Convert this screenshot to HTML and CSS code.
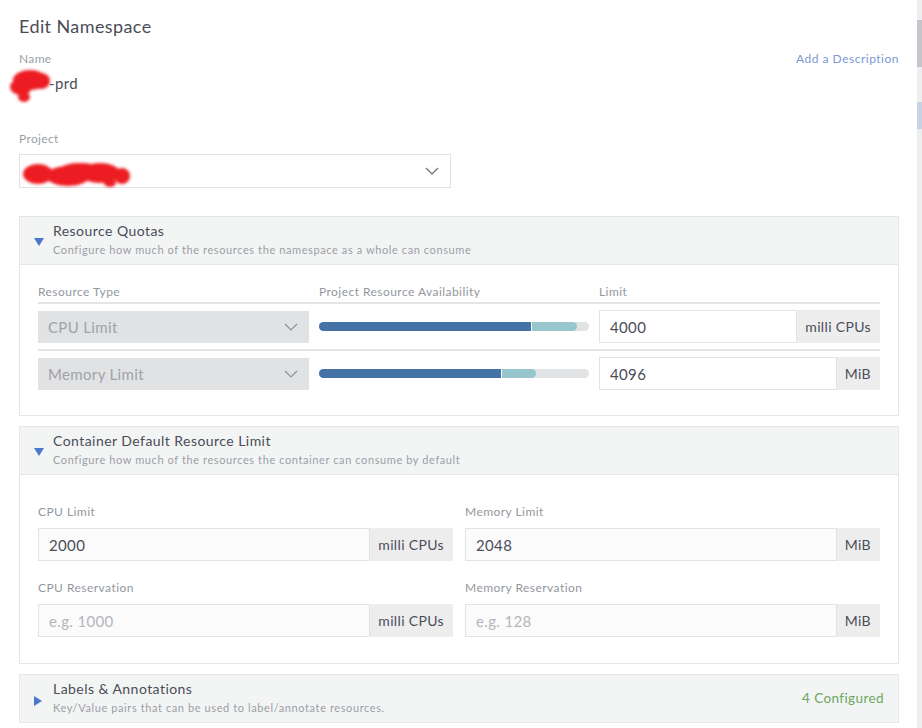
FILE: index.html
```html
<!DOCTYPE html>
<html>
<head>
<meta charset="utf-8">
<link rel="stylesheet" href="styles.css">
</head>
<body>
<div class="page">
  <h1 class="title">Edit Namespace</h1>

  <div class="name-head">
    <span class="lbl">Name</span>
    <span class="add-desc">Add a Description</span>
  </div>
  <div class="name-val">
    <svg class="redact-name" width="46" height="38" viewBox="0 0 46 38">
      <defs><filter id="b1"><feGaussianBlur stdDeviation="1.6"/></filter></defs>
      <g fill="#ec1c24" filter="url(#b1)">
        <ellipse cx="23" cy="13" rx="17" ry="10"/>
        <ellipse cx="14" cy="20" rx="11" ry="8"/>
        <ellipse cx="34" cy="14" rx="9" ry="8"/>
        <ellipse cx="17" cy="30" rx="6" ry="5"/>
      </g>
    </svg><span class="val">-prd</span>
  </div>

  <div class="lbl proj-lbl">Project</div>
  <div class="project-select">
    <svg class="redact-proj" width="114" height="36" viewBox="0 0 114 36">
      <defs><filter id="b2"><feGaussianBlur stdDeviation="1.6"/></filter></defs>
      <g fill="#ec1c24" filter="url(#b2)">
        <ellipse cx="18" cy="19" rx="15" ry="10"/>
        <ellipse cx="48" cy="21" rx="22" ry="10"/>
        <ellipse cx="80" cy="18" rx="20" ry="10"/>
        <ellipse cx="102" cy="21" rx="8" ry="8"/>
        <ellipse cx="60" cy="13" rx="18" ry="5"/>
        <ellipse cx="90" cy="28" rx="6" ry="4"/>
      </g>
    </svg>
    <svg class="chev" width="14" height="8" viewBox="0 0 14 8"><path d="M1 1 L7 7 L13 1" fill="none" stroke="#6b6f76" stroke-width="1.2"/></svg>
  </div>

  <section class="card quotas">
    <header class="card-head">
      <span class="tri-down"></span>
      <div class="head-text">
        <div class="head-title">Resource Quotas</div>
        <div class="head-sub">Configure how much of the resources the namespace as a whole can consume</div>
      </div>
    </header>
    <div class="card-body qbody">
      <div class="qgrid qhead">
        <div>Resource Type</div>
        <div>Project Resource Availability</div>
        <div>Limit</div>
      </div>
      <div class="qgrid qrow first">
        <div class="gsel"><span>CPU Limit</span>
          <svg width="14" height="8" viewBox="0 0 14 8"><path d="M1 1 L7 7 L13 1" fill="none" stroke="#8e9197" stroke-width="1.2"/></svg>
        </div>
        <div class="bar">
          <span class="used" style="width:79%"></span><span class="cur" style="width:16.6%"></span>
        </div>
        <div class="igroup"><span class="inp">4000</span><span class="addon">milli CPUs</span></div>
      </div>
      <div class="qgrid qrow second">
        <div class="gsel"><span>Memory Limit</span>
          <svg width="14" height="8" viewBox="0 0 14 8"><path d="M1 1 L7 7 L13 1" fill="none" stroke="#8e9197" stroke-width="1.2"/></svg>
        </div>
        <div class="bar">
          <span class="used" style="width:67.6%"></span><span class="cur" style="width:12.6%"></span>
        </div>
        <div class="igroup"><span class="inp">4096</span><span class="addon">MiB</span></div>
      </div>
    </div>
  </section>

  <section class="card container">
    <header class="card-head">
      <span class="tri-down"></span>
      <div class="head-text">
        <div class="head-title">Container Default Resource Limit</div>
        <div class="head-sub">Configure how much of the resources the container can consume by default</div>
      </div>
    </header>
    <div class="card-body cbody">
      <div class="field">
        <div class="flbl">CPU Limit</div>
        <div class="igroup tall"><span class="inp soft">2000</span><span class="addon">milli CPUs</span></div>
      </div>
      <div class="field">
        <div class="flbl">Memory Limit</div>
        <div class="igroup tall"><span class="inp soft">2048</span><span class="addon">MiB</span></div>
      </div>
      <div class="field">
        <div class="flbl">CPU Reservation</div>
        <div class="igroup tall"><span class="inp soft ph">e.g. 1000</span><span class="addon">milli CPUs</span></div>
      </div>
      <div class="field">
        <div class="flbl">Memory Reservation</div>
        <div class="igroup tall"><span class="inp soft ph">e.g. 128</span><span class="addon">MiB</span></div>
      </div>
    </div>
  </section>

  <section class="card labels">
    <header class="card-head last">
      <span class="tri-right"></span>
      <div class="head-text">
        <div class="head-title">Labels &amp; Annotations</div>
        <div class="head-sub">Key/Value pairs that can be used to label/annotate resources.</div>
      </div>
      <span class="configured">4 Configured</span>
    </header>
  </section>
</div>
<div class="side">
  <div class="s-gap1"></div>
  <div class="s-thumb"></div>
  <div class="s-gap2"></div>
  <div class="s-blue"></div>
</div>
</body>
</html>
```

FILE: styles.css
```css
* { box-sizing: border-box; }
html, body { margin: 0; padding: 0; background: #fff; }
body {
  display: flex;
  width: 922px;
  height: 728px;
  overflow: hidden;
  font-family: Lato, "Open Sans", sans-serif;
  color: #3c3f49;
  letter-spacing: 0.35px;
}
.page {
  width: 917px;
  padding: 14px 18px 0 19px;
}
.side {
  width: 5px;
  background: #eceef0;
  display: flex;
  flex-direction: column;
}
.s-gap1 { height: 20px; }
.s-thumb { height: 47px; background: #c4c6c9; }
.s-gap2 { height: 35px; }
.s-blue { height: 27px; background: #c8d2e2; }

.title {
  margin: 0;
  font-size: 18px;
  line-height: 24px;
  font-weight: 400;
  color: #4a4d58;
  letter-spacing: 0.4px;
}
.name-head {
  margin-top: 14px;
  display: flex;
  justify-content: space-between;
  align-items: center;
  height: 14px;
}
.lbl {
  font-size: 12px;
  line-height: 14px;
  color: #999ea5;
}
.add-desc {
  font-size: 12px;
  color: #7b98d4;
  letter-spacing: 0.5px;
  margin-top: -1px;
}
.name-val {
  margin-top: 4px;
  display: flex;
  align-items: center;
  height: 26px;
}
.redact-name { margin-left: -12px; margin-top: 6px; flex: none; }
.val { font-size: 15px; color: #4a4d58; margin-left: -4px; }
.proj-lbl { margin-top: 36px; }
.project-select {
  margin-top: 8px;
  width: 432px;
  height: 34px;
  border: 1px solid #dfe3e6;
  display: flex;
  align-items: center;
  justify-content: space-between;
  padding: 0 11px 0 0;
  overflow: visible;
}
.redact-proj { margin-top: 4px; }

.card {
  width: 880px;
  border: 1px solid #e4e6e8;
}
.quotas { margin-top: 28px; }
.container { margin-top: 10px; }
.labels { margin-top: 10px; }
.card-head {
  background: #f3f4f4;
  border-bottom: 1px solid #e4e6e8;
  height: 48px;
  display: flex;
  align-items: center;
  padding: 0 14px;
}
.card-head.last { border-bottom: 0; height: 47px; }
.tri-down {
  width: 0; height: 0;
  border-left: 5px solid transparent;
  border-right: 5px solid transparent;
  border-top: 8px solid #4b78cc;
  margin-top: 3px;
  margin-right: 9px;
  flex: none;
}
.tri-right {
  width: 0; height: 0;
  border-top: 5px solid transparent;
  border-bottom: 5px solid transparent;
  border-left: 8px solid #4b78cc;
  margin-top: 4px;
  margin-right: 11px;
  flex: none;
}
.head-text { flex: 1; margin-top: -3px; }
.head-title {
  font-size: 14px;
  line-height: 18px;
  color: #4a4d58;
  letter-spacing: 0.45px;
}
.head-sub {
  font-size: 11px;
  line-height: 15px;
  margin-top: 2px;
  color: #9b9fa6;
  letter-spacing: 0.6px;
}
.configured {
  font-size: 13.5px;
  color: #6aa85d;
  letter-spacing: 0.4px;
  margin-top: -2px;
}

.card-body { padding: 0 18px 0 18px; }
.qbody { padding-top: 20px; padding-bottom: 19px; }
.qgrid {
  display: grid;
  grid-template-columns: 271px 270px 1fr;
  column-gap: 10px;
  align-items: center;
}
.qhead {
  font-size: 12px;
  line-height: 14px;
  color: #93979e;
  padding-bottom: 3px;
  border-bottom: 2px solid #e4e5e6;
  letter-spacing: 0.45px;
}
.qrow { padding: 6px 0; }
.qrow.first { border-bottom: 2px solid #e4e5e6; }
.gsel {
  height: 32px;
  background: #e1e2e4;
  display: flex;
  align-items: center;
  justify-content: space-between;
  padding: 0 11px 0 10px;
  font-size: 15px;
  color: #a0a3a8;
}
.bar {
  height: 9px;
  border-radius: 5px;
  background: #e2e3e5;
  display: flex;
  overflow: hidden;
}
.bar .used { background: #4572a6; border-right: 1px solid #fff; }
.bar .cur { background: #97c7cc; border-radius: 0 5px 5px 0; }
.igroup {
  display: flex;
  height: 33px;
}
.inp {
  flex: 1;
  border: 1px solid #e1e3e5;
  background: #fff;
  display: flex;
  align-items: center;
  padding-left: 10px;
  font-size: 15px;
  color: #4a4d58;
}
.inp.soft { background: #fbfbfb; }
.inp.ph { color: #b3b6bb; }
.addon {
  background: #ededee;
  display: flex;
  align-items: center;
  padding: 0 9px 0 8px;
  font-size: 14px;
  color: #4a4d58;
}

.cbody {
  padding-top: 29px;
  padding-bottom: 26px;
  display: grid;
  grid-template-columns: 1fr 1fr;
  column-gap: 12px;
  row-gap: 19px;
}
.flbl {
  font-size: 12px;
  line-height: 16px;
  color: #93979e;
  margin-bottom: 8px;
  letter-spacing: 0.45px;
}
.igroup.tall { height: 33px; }
```
